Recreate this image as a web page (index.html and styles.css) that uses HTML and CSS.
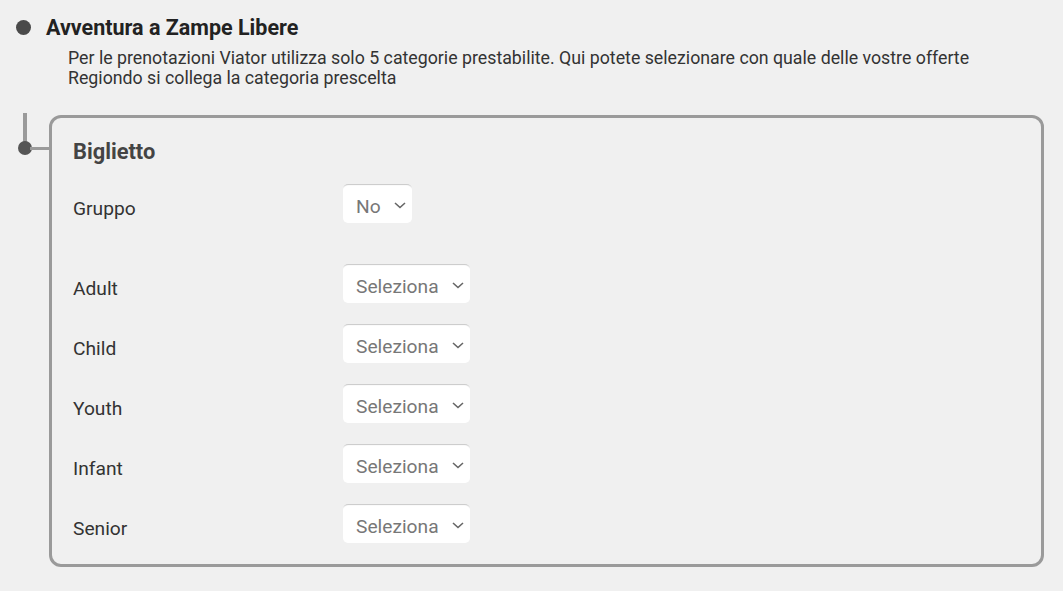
FILE: index.html
```html
<!DOCTYPE html>
<html lang="it">
<head>
    <meta charset="UTF-8">
    <title>Avventura a Zampe Libere</title>
    <link rel="stylesheet" href="styles.css">
</head>
<body>
    <div class="page">
        <div class="offer-head">
            <span class="bullet"></span>
            <h2 class="offer-title">Avventura a Zampe Libere</h2>
        </div>
        <p class="offer-desc">Per le prenotazioni Viator utilizza solo 5 categorie prestabilite. Qui potete selezionare con quale delle vostre offerte<br>Regiondo si collega la categoria prescelta</p>

        <div class="ticket-box">
            <!-- tree connector -->
            <span class="tree-line"></span>
            <span class="tree-dot"></span>
            <span class="tree-arm"></span>

            <h3 class="ticket-title">Biglietto</h3>

            <div class="field group-field">
                <label class="field-label">Gruppo</label>
                <div class="select-wrap">
                    <select class="select">
                        <option>No</option>
                    </select>
                    <svg class="chevron" width="12" height="7" viewBox="0 0 12 7"><path d="M1 1l5 4.5L11 1" fill="none" stroke="#666" stroke-width="1.6"/></svg>
                </div>
            </div>

            <div class="categories">
                <div class="field">
                    <label class="field-label">Adult</label>
                    <div class="select-wrap">
                        <select class="select"><option>Seleziona</option></select>
                        <svg class="chevron" width="12" height="7" viewBox="0 0 12 7"><path d="M1 1l5 4.5L11 1" fill="none" stroke="#666" stroke-width="1.6"/></svg>
                    </div>
                </div>
                <div class="field">
                    <label class="field-label">Child</label>
                    <div class="select-wrap">
                        <select class="select"><option>Seleziona</option></select>
                        <svg class="chevron" width="12" height="7" viewBox="0 0 12 7"><path d="M1 1l5 4.5L11 1" fill="none" stroke="#666" stroke-width="1.6"/></svg>
                    </div>
                </div>
                <div class="field">
                    <label class="field-label">Youth</label>
                    <div class="select-wrap">
                        <select class="select"><option>Seleziona</option></select>
                        <svg class="chevron" width="12" height="7" viewBox="0 0 12 7"><path d="M1 1l5 4.5L11 1" fill="none" stroke="#666" stroke-width="1.6"/></svg>
                    </div>
                </div>
                <div class="field">
                    <label class="field-label">Infant</label>
                    <div class="select-wrap">
                        <select class="select"><option>Seleziona</option></select>
                        <svg class="chevron" width="12" height="7" viewBox="0 0 12 7"><path d="M1 1l5 4.5L11 1" fill="none" stroke="#666" stroke-width="1.6"/></svg>
                    </div>
                </div>
                <div class="field">
                    <label class="field-label">Senior</label>
                    <div class="select-wrap">
                        <select class="select"><option>Seleziona</option></select>
                        <svg class="chevron" width="12" height="7" viewBox="0 0 12 7"><path d="M1 1l5 4.5L11 1" fill="none" stroke="#666" stroke-width="1.6"/></svg>
                    </div>
                </div>
            </div>
        </div>
    </div>
</body>
</html>
```

FILE: styles.css
```css
body {
    margin: 0;
    background: #f0f0f0;
    font-family: Roboto, "Liberation Sans", sans-serif;
    color: #333;
}
.page {
    padding: 16px 0 0 16px;
}
.offer-head {
    display: flex;
    align-items: center;
    gap: 15px;
}
.bullet {
    width: 15px;
    height: 15px;
    border-radius: 50%;
    background: #4a4a4a;
    margin-top: -1px;
}
.offer-title {
    margin: 0;
    font-size: 21.5px;
    line-height: 24px;
    font-weight: 700;
    color: #222;
}
.offer-desc {
    margin: 8px 0 0 52px;
    font-size: 17.75px;
    line-height: 20px;
    color: #333;
}
.ticket-box {
    position: relative;
    margin: 27px 0 0 33px;
    width: 995px;
    box-sizing: border-box;
    border: 3px solid #9a9a9a;
    border-radius: 12px;
    padding: 22px 21px 21px 21px;
}
.tree-line {
    position: absolute;
    left: -29px;
    top: -5px;
    width: 4px;
    height: 36px;
    background: #9a9a9a;
}
.tree-dot {
    position: absolute;
    left: -34px;
    top: 23px;
    width: 14px;
    height: 14px;
    border-radius: 50%;
    background: #555;
}
.tree-arm {
    position: absolute;
    left: -22px;
    top: 29px;
    width: 22px;
    height: 3px;
    background: #9a9a9a;
}
.ticket-title {
    margin: 0;
    font-size: 21.8px;
    line-height: 24px;
    font-weight: 700;
    color: #444;
}
.field {
    display: flex;
    align-items: flex-start;
}
.group-field {
    margin-top: 20px;
}
.categories {
    margin-top: 41px;
    display: flex;
    flex-direction: column;
    gap: 21px;
}
.field-label {
    width: 270px;
    padding-top: 14px;
    font-size: 19.2px;
    line-height: 21px;
    color: #333;
}
.select-wrap {
    position: relative;
}
.select {
    appearance: none;
    -webkit-appearance: none;
    display: block;
    box-sizing: border-box;
    height: 39px;
    padding: 5px 31px 0 13px;
    border: none;
    border-radius: 5px;
    background: #fff;
    box-shadow: inset 0 2px 1px -1px #c8c8c8;
    font-family: inherit;
    font-size: 19.2px;
    color: #777;
    outline: none;
}
.chevron {
    position: absolute;
    right: 6px;
    top: 18px;
    pointer-events: none;
}
```
